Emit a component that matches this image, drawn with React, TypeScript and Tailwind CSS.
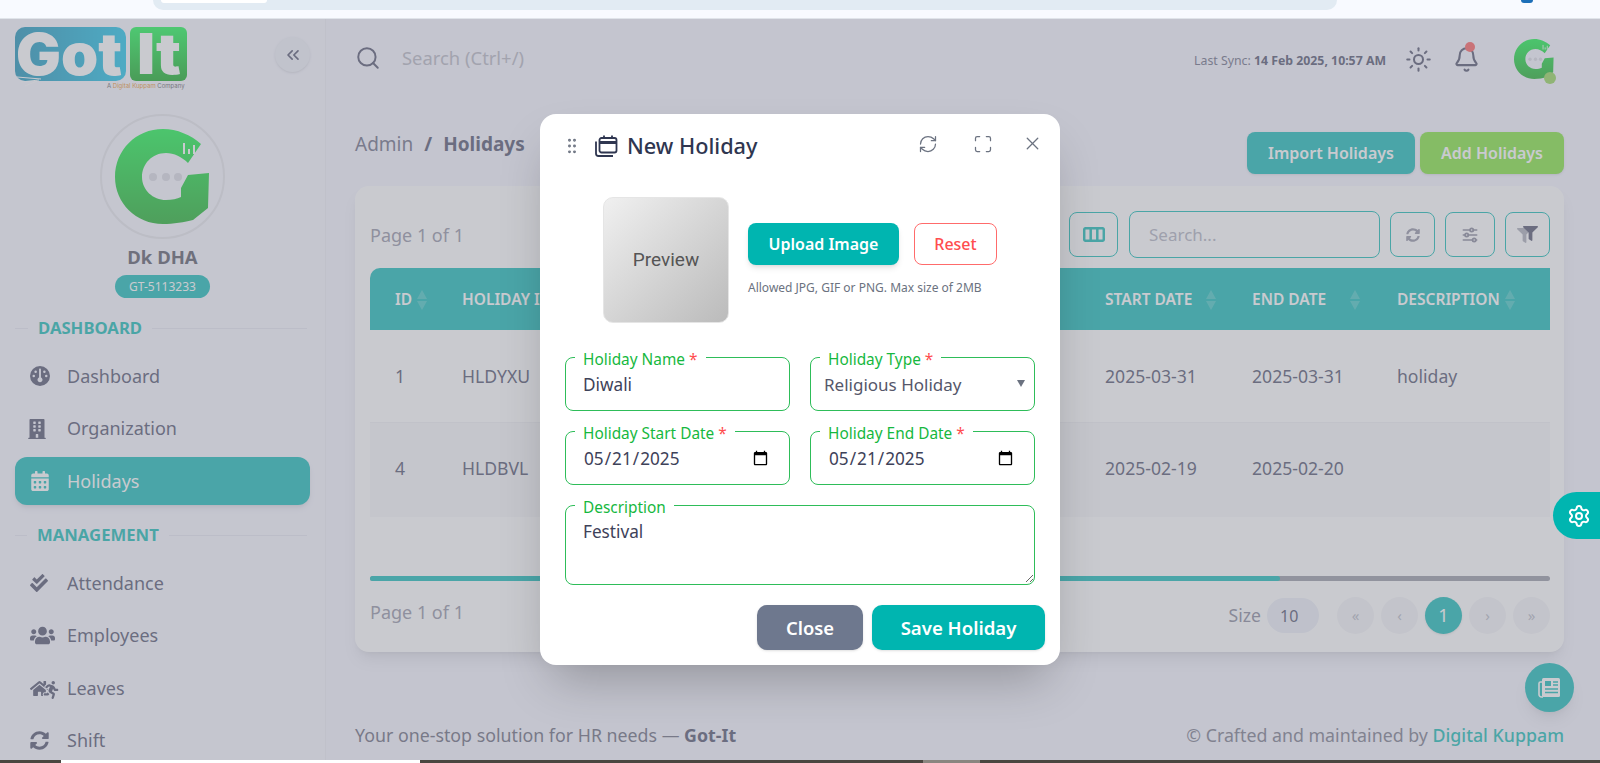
import React from 'react'
import { Bell, ChevronsLeft, GripVertical, Maximize, RefreshCw, Search, Settings, Sun, X } from 'lucide-react'
import { FaBuilding, FaCalendarAlt, FaCheckDouble, FaFilter, FaHome, FaRunning, FaSyncAlt, FaUsers } from 'react-icons/fa'
import { FaGauge } from 'react-icons/fa6'
import { TbAdjustmentsHorizontal } from 'react-icons/tb'

function GMark(props: { size: number; id: string }) {
    return (
        <svg width={props.size} height={props.size} viewBox="0 0 95 95">
            <defs>
                <linearGradient id={props.id} x1="0" y1="0" x2="0" y2="1">
                    <stop offset="0" stopColor="#04f43a" />
                    <stop offset="1" stopColor="#0aa818" />
                </linearGradient>
            </defs>
            <path fill={`url(#${props.id})`} d="M48 0C62 0 76 6 86 15L73 34C67 28 59 24 51 24C37 24 27 35 27 48C27 61 38 71 51 71C57 71 62 70 66 68L66 59L73 46L94 44L93 79L78 91C70 93 58 95 48 95C21 95 0 74 0 48C0 21 21 0 48 0Z" />
            <circle cx="38" cy="48" r="4" fill="#d6d6e0" />
            <circle cx="51" cy="48" r="4" fill="#d6d6e0" />
            <circle cx="63" cy="48" r="4" fill="#d6d6e0" />
            <path stroke="#fff" strokeWidth="2" d="M69 14V25M74 20V25M79 16V25" />
        </svg>
    )
}

function Logo() {
    return (
        <svg width="175" height="62" viewBox="0 0 175 62" className="overflow-visible">
            <defs>
                <linearGradient id="logoBlue" x1="0" y1="0" x2="1" y2="0">
                    <stop offset="0" stopColor="#0888b0" />
                    <stop offset="1" stopColor="#08c0e8" />
                </linearGradient>
                <linearGradient id="logoGreen" x1="0" y1="0" x2="0" y2="1">
                    <stop offset="0" stopColor="#0afa44" />
                    <stop offset="1" stopColor="#00a210" />
                </linearGradient>
            </defs>
            <rect x="0" y="0" width="111" height="54" rx="10" fill="url(#logoBlue)" />
            <rect x="115" y="0" width="57" height="54" rx="6" fill="url(#logoGreen)" />
            <text x="1" y="48" fontSize="58" fontWeight="900" fontFamily="Inter, sans-serif" fill="#fff" textLength="106" lengthAdjust="spacingAndGlyphs">Got</text>
            <text x="122" y="47" fontSize="56" fontWeight="900" fontFamily="Inter, sans-serif" fill="#fff" textLength="44" lengthAdjust="spacingAndGlyphs">It</text>
            <text x="92" y="61" fontSize="6" fontFamily="Inter, sans-serif" fill="#555">A <tspan fill="#e88a10">Digital Kuppam</tspan> Company</text>
            <path stroke="#fff" strokeWidth="1" d="M2 50L26 52M6 55L24 53M10 59L22 54" />
        </svg>
    )
}

function MenuItem(props: { icon: React.ReactNode; label: string; active?: boolean }) {
    return (
        <div className={props.active
            ? 'flex items-center h-[48px] pl-[15px] rounded-[12px] bg-[#00b5b0] text-white shadow-md'
            : 'flex items-center h-[48px] pl-[15px] text-[#424460]'}>
            <span className="w-[37px] flex items-center">{props.icon}</span>
            <span className="text-[18px]">{props.label}</span>
        </div>
    )
}

function SectionLabel(props: { label: string; indent: string }) {
    return (
        <div className="flex items-center h-[20px] mt-[20px] mb-[14px]">
            <div className={`${props.indent} h-px bg-[#e4e4f0]`} />
            <span className="px-[10px] text-[16.7px] font-bold text-[#00b5ad]">{props.label}</span>
            <div className="flex-1 h-px bg-[#e4e4f0] mr-[3px]" />
        </div>
    )
}

function Sidebar() {
    return (
        <aside className="w-[326px] shrink-0 px-[15px] border-r border-[#ecedf5] bg-[#f6f6ff] overflow-hidden">
            <div className="flex justify-between items-start mt-[8px] h-[62px]">
                <Logo />
                <button className="w-[35px] h-[35px] mt-[10px] rounded-full bg-[#eef0f8] shadow flex items-center justify-center text-[#424460]">
                    <ChevronsLeft size={20} />
                </button>
            </div>
            <div className="mt-[25px] mx-auto w-[125px] h-[125px] rounded-full border-[2px] border-[#e4e4ea] flex items-center justify-center">
                <GMark size={95} id="gBig" />
            </div>
            <div className="mt-[4px] h-[28px] leading-[28px] text-center text-[18.5px] font-bold text-[#4a4a58]">Dk DHA</div>
            <div className="mt-[4px] mx-auto w-[95px] h-[23px] rounded-full bg-[#00b5b0] text-white text-[12px] flex items-center justify-center">GT-5113233</div>
            <SectionLabel label="DASHBOARD" indent="w-[13px]" />
            <div className="flex flex-col gap-[4.5px]">
                <MenuItem icon={<FaGauge size={20} />} label="Dashboard" />
                <MenuItem icon={<FaBuilding size={20} className="-ml-[3px]" />} label="Organization" />
                <MenuItem active icon={<FaCalendarAlt size={20} />} label="Holidays" />
            </div>
            <SectionLabel label="MANAGEMENT" indent="w-[12px]" />
            <div className="flex flex-col gap-[4.5px]">
                <MenuItem icon={<FaCheckDouble size={18} />} label="Attendance" />
                <MenuItem icon={<FaUsers size={25} />} label="Employees" />
                <MenuItem icon={
                    <span className="flex items-center">
                        <FaHome size={19} />
                        <FaRunning size={18} className="-ml-[7px] mt-[4px] stroke-[#f6f6ff] stroke-[60px] [paint-order:stroke]" />
                    </span>
                } label="Leaves" />
                <MenuItem icon={<FaSyncAlt size={19} />} label="Shift" />
            </div>
        </aside>
    )
}

function SortArrows(props: { gap: string }) {
    return (
        <span className={`flex flex-col gap-[2px] ${props.gap} shrink-0`}>
            <span className="w-0 h-0 border-x-[5px] border-x-transparent border-b-[9px] border-b-white/20" />
            <span className="w-0 h-0 border-x-[5px] border-x-transparent border-t-[9px] border-t-white/20" />
        </span>
    )
}

function Th(props: { label: string; width: string; gap?: string }) {
    return (
        <th className={`${props.width} pl-[25px] pt-[2px] text-left font-semibold text-[15.5px] text-white whitespace-nowrap overflow-hidden`}>
            <span className="flex items-center">{props.label}<SortArrows gap={props.gap ?? 'ml-[5px]'} /></span>
        </th>
    )
}

function ToolButton(props: { width: string; children: React.ReactNode }) {
    return (
        <button className={`${props.width} h-[45px] rounded-[8px] border border-[#00b5ad] flex items-center justify-center`}>
            {props.children}
        </button>
    )
}

function PageButton(props: { label: string; active?: boolean }) {
    return (
        <span className={props.active
            ? 'w-[37px] h-[37px] rounded-full bg-[#00b5b0] text-white text-[18px] shadow flex items-center justify-center'
            : 'w-[37px] h-[37px] rounded-full bg-[#f3f3f6] text-[#b0b2c0] text-[15px] flex items-center justify-center'}>
            {props.label}
        </span>
    )
}

function HolidaysCard() {
    return (
        <section className="mt-[12px] h-[466px] bg-white rounded-[14px] shadow-lg pl-[15px] pr-[14px] pt-[25px]">
            <div className="flex items-center justify-between h-[47px]">
                <span className="text-[18px] text-[#8a8a9c] mt-[1px]">Page 1 of 1</span>
                <div className="flex items-center">
                    <ToolButton width="w-[49px]">
                        <svg width="22" height="15" viewBox="0 0 22 15" fill="none" stroke="#00b5ad" strokeWidth="2.5">
                            <rect x="1.2" y="1.2" width="19.6" height="12.6" rx="1.5" />
                            <path d="M7.7 1V14M14.3 1V14" />
                        </svg>
                    </ToolButton>
                    <div className="ml-[11px] w-[251px] h-[47px] rounded-[8px] border border-[#00b5ad] flex items-center pl-[19px] text-[17px] text-[#a8aab8]">Search...</div>
                    <div className="ml-[10px]"><ToolButton width="w-[45px]"><FaSyncAlt size={14} className="text-[#8a8a9c]" /></ToolButton></div>
                    <div className="ml-[10px]"><ToolButton width="w-[50px]"><TbAdjustmentsHorizontal size={20} className="text-[#7c7c90]" /></ToolButton></div>
                    <div className="ml-[10px]">
                        <ToolButton width="w-[45px]">
                            <span className="relative flex">
                                <FaFilter size={15} className="text-[#a4a6b2] -mr-[9px] mt-[2px]" />
                                <FaFilter size={15} className="text-[#424460]" />
                            </span>
                        </ToolButton>
                    </div>
                </div>
            </div>
            <table className="mt-[10px] w-[1180px] table-fixed border-collapse text-[17.6px] text-[#424460]">
                <thead>
                    <tr className="h-[62px] bg-[#00b5b0]">
                        <Th label="ID" width="w-[67px] rounded-tl-[10px]" />
                        <Th label="HOLIDAY ID" width="w-[210px]" />
                        <Th label="HOLIDAY NAME" width="w-[220px]" />
                        <Th label="HOLIDAY TYPE" width="w-[213px]" />
                        <Th label="START DATE" width="w-[147px]" gap="ml-[14px]" />
                        <Th label="END DATE" width="w-[145px]" gap="ml-[24px]" />
                        <Th label="DESCRIPTION" width="w-[178px]" />
                    </tr>
                </thead>
                <tbody>
                    <tr className="h-[92px] border-b border-[#eeeef2]">
                        <td className="pl-[25px]">1</td>
                        <td className="pl-[25px]">HLDYXU</td>
                        <td /><td />
                        <td className="pl-[25px]">2025-03-31</td>
                        <td className="pl-[25px]">2025-03-31</td>
                        <td className="pl-[25px]">holiday</td>
                    </tr>
                    <tr className="h-[95px] bg-[#f6f6f9]">
                        <td className="pl-[25px] pb-[4px]">4</td>
                        <td className="pl-[25px] pb-[4px]">HLDBVL</td>
                        <td /><td />
                        <td className="pl-[25px] pb-[4px]">2025-02-19</td>
                        <td className="pl-[25px] pb-[4px]">2025-02-20</td>
                        <td />
                    </tr>
                </tbody>
            </table>
            <div className="mt-[59px] h-[5px] rounded-full bg-[#8e909c]">
                <div className="h-[5px] w-[910px] rounded-full bg-[#00b5b0]" />
            </div>
            <div className="mt-[16px] flex items-start justify-between h-[37px]">
                <span className="text-[18px] leading-[30px] text-[#8a8a9c]">Page 1 of 1</span>
                <div className="flex items-center">
                    <span className="text-[17.6px] text-[#7c7c90] mr-[6px]">Size</span>
                    <span className="w-[52px] h-[35px] rounded-full bg-[#eaedf6] text-[16px] text-[#424460] pl-[13px] flex items-center mr-[18px]">10</span>
                    <div className="flex gap-[7px]">
                        <PageButton label="«" />
                        <PageButton label="‹" />
                        <PageButton label="1" active />
                        <PageButton label="›" />
                        <PageButton label="»" />
                    </div>
                </div>
            </div>
        </section>
    )
}

function Field(props: { label: string; required?: boolean; height: string; children: React.ReactNode; className?: string }) {
    return (
        <fieldset className={`${props.height} ${props.className ?? ''} border border-[#2ebd59] rounded-[8px] min-w-0`}>
            <legend className="ml-[9px] px-[8px] text-[15.4px] leading-[20px] text-[#16b83e] translate-y-[2.5px]">
                {props.label}{props.required && <span className="text-[#ff4d4f]"> *</span>}
            </legend>
            {props.children}
        </fieldset>
    )
}

function NewHolidayModal() {
    const inputClass = 'w-full h-[30px] pl-[17px] pr-[18px] text-[17.2px] text-[#3e4259] outline-none bg-transparent'
    return (
        <div className="w-[520px] h-[551px] bg-white rounded-[16px] shadow-2xl pt-[16px]">
            <div className="flex items-center h-[32px] pl-[22px] pr-[17px]">
                <GripVertical size={20} strokeWidth={1.5} className="text-[#6b7280]" />
                <svg width="24" height="24" viewBox="0 0 24 24" fill="none" stroke="#2f3650" strokeWidth="1.8" className="ml-[12px]">
                    <rect x="5.5" y="4" width="17" height="14.5" rx="2" />
                    <path d="M5.5 8.5H22.5" strokeWidth="3" />
                    <path d="M10 1.5V5M18 1.5V5" />
                    <path d="M2 7.5V19.5C2 21 3 22 4.5 22H19" />
                </svg>
                <span className="ml-[9px] text-[21.7px] font-medium text-[#2f3650]">New Holiday</span>
                <div className="ml-auto -mt-[5px] flex items-center text-[#6b7280]">
                    <RefreshCw size={20} strokeWidth={1.5} />
                    <Maximize size={20} strokeWidth={1.5} className="ml-[35px]" />
                    <X size={21} strokeWidth={1.5} className="ml-[29px]" />
                </div>
            </div>
            <div className="mt-[35px] ml-[63px] flex items-center">
                <div className="w-[126px] h-[126px] rounded-[10px] border border-[#e5e5e5] bg-linear-to-br from-[#f0f0f0] to-[#bbbbbb] flex items-center justify-center text-[19px] text-[#555] font-['Roboto',sans-serif]">Preview</div>
                <div className="ml-[19px]">
                    <div className="flex items-center gap-[15px]">
                        <button className="w-[151px] h-[42px] rounded-[8px] bg-[#00b5b0] text-white text-[16px] font-semibold shadow-md">Upload Image</button>
                        <button className="w-[83px] h-[42px] rounded-[8px] border border-[#ff6b6b] text-[#ff4d4f] text-[16px] font-medium">Reset</button>
                    </div>
                    <p className="mt-[14px] text-[12px] text-[#6b7280]">Allowed JPG, GIF or PNG. Max size of 2MB</p>
                </div>
            </div>
            <div className="mt-[24px] mx-[25px] w-[470px] grid grid-cols-2 gap-x-[20px] gap-y-[10px]">
                <Field label="Holiday Name" required height="h-[64px]">
                    <input className={`${inputClass} mt-[2px]`} defaultValue="Diwali" />
                </Field>
                <Field label="Holiday Type" required height="h-[64px]" className="relative">
                    <select defaultValue="Religious Holiday" className="w-full h-[30px] mt-[3px] pl-[13px] text-[17px] text-[#55576a] outline-none bg-transparent appearance-none">
                        <option>Religious Holiday</option>
                    </select>
                    <span className="absolute right-[9px] top-[13px] w-0 h-0 border-x-[4px] border-x-transparent border-t-[7px] border-t-[#6b7280]" />
                </Field>
                <Field label="Holiday Start Date" required height="h-[64px]">
                    <input type="date" className={`${inputClass} mt-[3px]`} defaultValue="2025-05-21" />
                </Field>
                <Field label="Holiday End Date" required height="h-[64px]">
                    <input type="date" className={`${inputClass} mt-[3px]`} defaultValue="2025-05-21" />
                </Field>
                <Field label="Description" height="h-[90px]" className="col-span-2">
                    <textarea className="block w-full h-[68px] pt-[5px] pl-[17px] text-[17.2px] leading-[24px] text-[#3e4259] outline-none bg-transparent" defaultValue="Festival" />
                </Field>
            </div>
            <div className="mt-[20px] mr-[15px] flex justify-end gap-[9px]">
                <button className="w-[106px] h-[45px] rounded-[10px] bg-[#6e788e] text-white text-[18.4px] font-semibold shadow">Close</button>
                <button className="w-[173px] h-[45px] rounded-[10px] bg-[#00b5b0] text-white text-[18.6px] font-semibold shadow">Save Holiday</button>
            </div>
        </div>
    )
}

export default function App() {
    return (
        <div className="h-[763px] w-[1600px] flex flex-col overflow-hidden font-['Noto_Sans',sans-serif]">
            {/* browser chrome left in the screenshot */}
            <div className="h-[19px] shrink-0 bg-[#f8faff] border-b border-[#e0e4ea] flex">
                <div className="ml-[153px] w-[1184px] h-[10px] rounded-b-[14px] bg-[#e2ebf3]">
                    <div className="ml-[8px] w-[106px] h-[3px] rounded-b-[6px] bg-white" />
                </div>
                <div className="ml-[184px] w-[12px] h-[3px] rounded-b-full bg-[#1d6fb8]" />
            </div>
            <div className="relative flex-1 flex min-h-0 bg-[#f4f4fe]">
                <Sidebar />
                <main className="flex-1 pl-[29px] pr-[36px] min-w-0">
                    <header className="h-[80px] flex items-center text-[#424460]">
                        <Search size={26} strokeWidth={1.8} className="-mt-[2px]" />
                        <span className="ml-[21px] -mt-[2px] text-[18.4px] text-[#b0b0bc]">Search (Ctrl+/)</span>
                        <span className="ml-auto text-[12.3px] text-[#5e6078] mt-[5px]">Last Sync: <b className="text-[#424460]">14 Feb 2025, 10:57 AM</b></span>
                        <Sun size={27} strokeWidth={1.8} className="ml-[19px]" />
                        <span className="relative ml-[21px]">
                            <Bell size={27} strokeWidth={1.8} />
                            <span className="absolute -top-[4px] right-[5px] w-[10px] h-[10px] rounded-full bg-[#ff5050]" />
                        </span>
                        <span className="relative ml-[34px] mr-[10px]">
                            <GMark size={40} id="gSmall" />
                            <span className="absolute -bottom-[5px] -right-[2px] w-[12px] h-[12px] rounded-full bg-[#8cd34a]" />
                        </span>
                    </header>
                    <div className="mt-[33px] h-[42px] flex items-start">
                        <span className="text-[19px] leading-[24px] text-[#5e6078]">Admin</span>
                        <span className="mx-[11px] text-[19px] leading-[24px] font-bold text-[#424460]">/</span>
                        <span className="text-[19px] leading-[24px] font-bold text-[#424460]">Holidays</span>
                        <div className="ml-auto flex gap-[5px]">
                            <button className="w-[168px] h-[42px] rounded-[8px] bg-[#00b5b0] text-white text-[16px] font-semibold shadow">Import Holidays</button>
                            <button className="w-[144px] h-[42px] rounded-[8px] bg-[#76e22a] text-white text-[16px] font-semibold shadow">Add Holidays</button>
                        </div>
                    </div>
                    <HolidaysCard />
                    <footer className="mt-[71px] flex justify-between text-[17.8px] leading-[24px]">
                        <span className="text-[#5c5d70]">Your one-stop solution for HR needs — <b className="text-[#424460]">Got-It</b></span>
                        <span className="text-[#6e6f80]">© Crafted and maintained by <span className="font-medium text-[#00b5ad]">Digital Kuppam</span></span>
                    </footer>
                </main>
                <button className="absolute right-[26px] top-[644px] w-[49px] h-[49px] rounded-full bg-[#00b5b0] shadow-lg text-white flex items-center justify-center">
                    <svg width="23" height="21" viewBox="0 0 23 21">
                        <rect x="4" y="1" width="18" height="19" rx="1.5" fill="#fff" />
                        <path d="M4 5H2.5A1.5 1.5 0 0 0 1 6.5V17.5A2.5 2.5 0 0 0 3.5 20H5" fill="none" stroke="#fff" strokeWidth="1.6" />
                        <rect x="7" y="4" width="6" height="5" fill="#00b5b0" />
                        <path d="M15 5H20M15 8H20M7 12H20M7 15.5H20" stroke="#00b5b0" strokeWidth="1.4" />
                    </svg>
                </button>
                {/* modal backdrop */}
                <div className="absolute inset-0 z-10 bg-[#9496a0]/50 flex items-center justify-center">
                    <NewHolidayModal />
                </div>
                <button className="absolute z-20 right-0 top-[473px] w-[47px] h-[47px] rounded-l-full bg-[#00b5b0] text-white flex items-center pl-[14px]">
                    <Settings size={24} strokeWidth={2} />
                </button>
            </div>
            <div className="h-[3px] shrink-0 flex bg-[#4a4640]">
                <div className="w-[61px]" />
                <div className="w-[359px] bg-white" />
                <div className="w-[503px]" />
                <div className="w-[57px] bg-[#8a8680]" />
            </div>
        </div>
    )
}
